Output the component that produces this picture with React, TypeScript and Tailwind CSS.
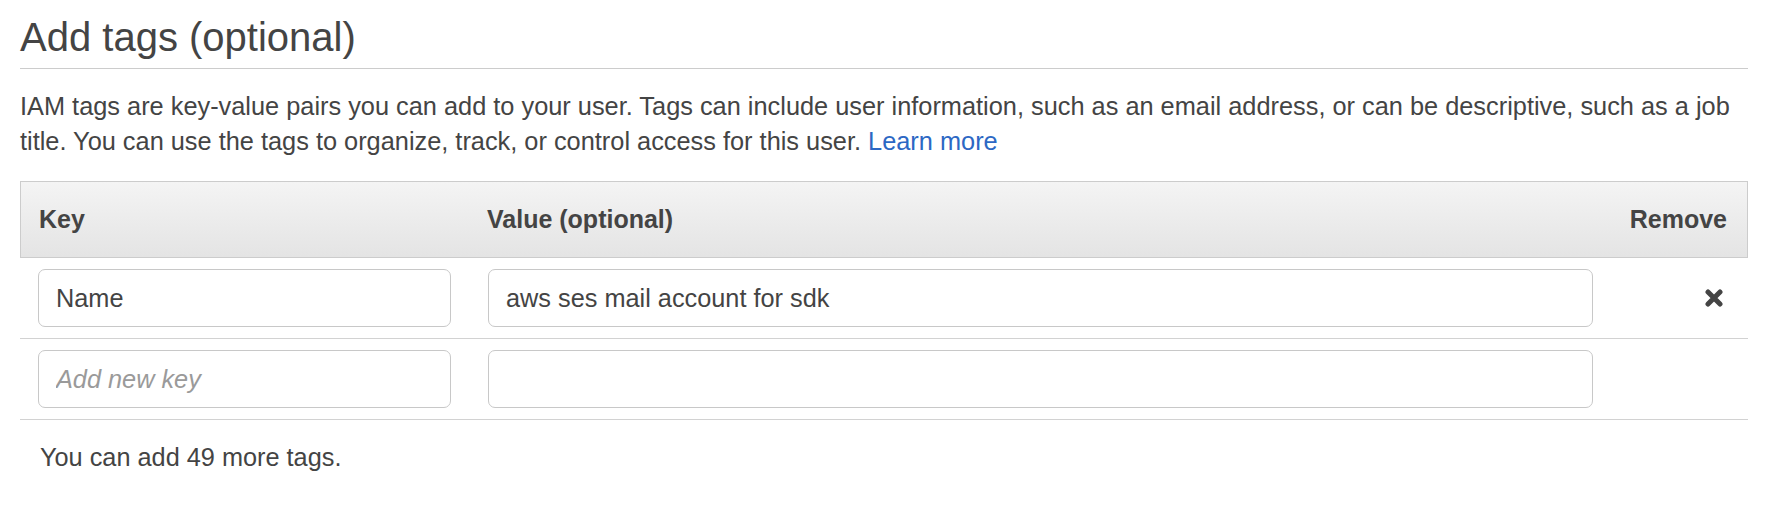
const tags = [
  { key: "Name", value: "aws ses mail account for sdk", removable: true },
  { key: "", value: "", removable: false },
];

function RemoveIcon() {
  return (
    <svg width="18" height="18" viewBox="0 0 18 18" className="text-[#444]">
      <path
        d="M3 3L15 15M15 3L3 15"
        stroke="currentColor"
        strokeWidth={5}
        strokeLinecap="round"
      />
    </svg>
  );
}

export default function App() {
  return (
    <div className="w-[1776px] h-[508px] bg-white text-[#444] font-['Liberation_Sans',Arial,sans-serif]">
      <div className="w-[1728px] ml-[20px]">
        {/* Title */}
        <h2 className="pt-[15px] pb-[9px] text-[40px] leading-[44px] font-normal border-b border-[#cccccc]">
          Add tags (optional)
        </h2>

        {/* Description */}
        <p className="mt-[20px] text-[25.35px] leading-[35px]">
          IAM tags are key-value pairs you can add to your user. Tags can include user information, such as an email
          address, or can be descriptive, such as a job title. You can use the tags to organize, track, or control
          access for this user. <a href="#" className="text-[#2c68c4]">Learn more</a>
        </p>

        {/* Table */}
        <div className="mt-[22px] text-[25px]">
          <div className="grid grid-cols-[449px_1142px_1fr] h-[77px] items-center border border-[#cccccc] bg-linear-to-b from-[#f4f4f4] to-[#e4e4e4] font-bold">
            <div className="pl-[18px]">Key</div>
            <div className="pl-[17px]">Value (optional)</div>
            <div className="pr-[20px] text-right">Remove</div>
          </div>

          {tags.map((tag, idx) => (
            <div
              key={idx}
              className="grid grid-cols-[450px_1142px_1fr] items-center py-[11px] border-b border-[#d2d2d2]"
            >
              <div className="pl-[18px]">
                <input
                  defaultValue={tag.key}
                  placeholder="Add new key"
                  className="w-[413px] h-[58px] px-[17px] rounded-[7px] border border-[#c8c8c8] bg-white text-[25.3px] text-[#444] outline-none placeholder:italic placeholder:text-[#9a9a9a]"
                />
              </div>
              <div className="pl-[18px]">
                <input
                  defaultValue={tag.value}
                  className="w-[1105px] h-[58px] px-[17px] rounded-[7px] border border-[#c8c8c8] bg-white text-[25.3px] text-[#444] outline-none"
                />
              </div>
              <div className="flex justify-end pr-[25px]">{tag.removable && <RemoveIcon />}</div>
            </div>
          ))}

          <p className="pt-[20px] pl-[20px] text-[25.3px] leading-[34px]">You can add 49 more tags.</p>
        </div>
      </div>
    </div>
  );
}
